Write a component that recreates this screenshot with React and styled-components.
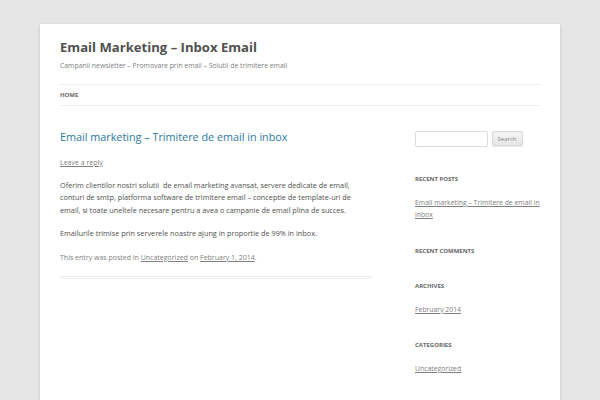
import React from "react";
import styled, { createGlobalStyle } from "styled-components";

const Global = createGlobalStyle`
  html, body { margin: 0; padding: 0; background: #e6e6e6; }
  body { font-family: "Open Sans", "Liberation Sans", Arial, sans-serif; color: #444; }
  * { box-sizing: border-box; }
`;

const Site = styled.div`
  margin: 24px 40px 0;
  background: #fff;
  padding: 0 20px;
  min-height: 376px;
  box-shadow: 0 1px 3px rgba(100, 100, 100, 0.3);
`;

const Header = styled.header`
  padding-top: 14.5px;
`;

const SiteTitle = styled.h1`
  margin: 0;
  font-size: 13.1px;
  line-height: 17px;
  font-weight: bold;
  color: #505050;
`;

const Description = styled.h2`
  margin: 3.5px 0 0;
  font-size: 6.85px;
  line-height: 13px;
  font-weight: normal;
  color: #808080;
`;

const Nav = styled.nav`
  margin-top: 11.5px;
  border-top: 1px solid #ededed;
  border-bottom: 1px solid #ededed;
  display: flex;
  gap: 21px;
`;

const NavItem = styled.a`
  font-size: 6px;
  line-height: 20px;
  font-weight: bold;
  text-transform: uppercase;
  color: #666;
  text-decoration: none;
`;

const Main = styled.div`
  display: flex;
  justify-content: space-between;
  padding-top: 24.5px;
`;

const Content = styled.main`
  width: 312px;
`;

const Article = styled.article`
  padding-bottom: 12px;
  border-bottom: 3px double #ededed;
`;

const EntryTitle = styled.h1`
  margin: 0;
  font-size: 10.8px;
  line-height: 13px;
  font-weight: normal;
  a { color: #2a7aa0; text-decoration: none; }
`;

const MutedLink = styled.a`
  color: #808080;
  text-decoration: underline;
`;

const CommentsLink = styled.div`
  margin-top: 12.5px;
  font-size: 7px;
  line-height: 13px;
`;

const EntryContent = styled.div`
  margin-top: 10.5px;
  p {
    margin: 0 0 11px;
    font-size: 7.3px;
    line-height: 12.4px;
    color: #505050;
  }
`;

const EntryMeta = styled.footer`
  margin-top: 1.5px;
  font-size: 7px;
  line-height: 13px;
  color: #808080;
`;

const Sidebar = styled.aside`
  width: 125px;
`;

const Widget = styled.section`
  margin-bottom: 23px;
  &:first-child { margin-bottom: 26.5px; }
`;

const WidgetTitle = styled.h3`
  margin: 0 0 12px;
  font-size: 6px;
  line-height: 12px;
  font-weight: bold;
  text-transform: uppercase;
  color: #666;
`;

const List = styled.ul`
  margin: 0;
  padding: 0;
  list-style: none;
  li {
    font-size: 6.85px;
    line-height: 12.3px;
  }
`;

const SearchForm = styled.form`
  display: flex;
  align-items: center;
  gap: 3.5px;
  padding-top: 0.5px;
`;

const SearchInput = styled.input`
  width: 73px;
  height: 16px;
  border: 1px solid #dcdcdc;
  border-radius: 2px;
  padding: 0 3px;
  font-family: inherit;
  font-size: 7px;
`;

const SearchButton = styled.button`
  width: 31px;
  height: 15px;
  padding: 0;
  font-family: inherit;
  font-size: 6px;
  color: #888;
  background: linear-gradient(#f4f4f4, #e6e6e6);
  border: 1px solid #d8d8d8;
  border-radius: 2px;
  box-shadow: 0 1px 1px rgba(64, 64, 64, 0.1);
`;

export default function App() {
  return (
    <>
      <Global />
      <Site>
        <Header>
          <SiteTitle>Email Marketing – Inbox Email</SiteTitle>
          <Description>
            Campanii newsletter – Promovare prin email – Solutii de trimitere email
          </Description>
          <Nav>
            <NavItem href="#">Home</NavItem>
          </Nav>
        </Header>
        <Main>
          <Content>
            <Article>
              <EntryTitle>
                <a href="#">Email marketing – Trimitere de email in inbox</a>
              </EntryTitle>
              <CommentsLink>
                <MutedLink href="#">Leave a reply</MutedLink>
              </CommentsLink>
              <EntryContent>
                <p>
                  Oferim clientilor nostri solutii&nbsp; de email marketing avansat, servere dedicate de email,
                  conturi de smtp, platforma software de trimitere email – conceptie de template-uri de
                  email, si toate uneltele necesare pentru a avea o campanie de email plina de succes.
                </p>
                <p>Emailurile trimise prin serverele noastre ajung in proportie de 99% in inbox.</p>
              </EntryContent>
              <EntryMeta>
                This entry was posted in <MutedLink href="#">Uncategorized</MutedLink> on{" "}
                <MutedLink href="#">February 1, 2014</MutedLink>.
              </EntryMeta>
            </Article>
          </Content>
          <Sidebar>
            <Widget>
              <SearchForm onSubmit={(e) => e.preventDefault()}>
                <SearchInput type="text" aria-label="Search for" />
                <SearchButton type="submit">Search</SearchButton>
              </SearchForm>
            </Widget>
            <Widget>
              <WidgetTitle>Recent Posts</WidgetTitle>
              <List>
                <li>
                  <MutedLink href="#">Email marketing – Trimitere de email in inbox</MutedLink>
                </li>
              </List>
            </Widget>
            <Widget>
              <WidgetTitle>Recent Comments</WidgetTitle>
              <List />
            </Widget>
            <Widget>
              <WidgetTitle>Archives</WidgetTitle>
              <List>
                <li>
                  <MutedLink href="#">February 2014</MutedLink>
                </li>
              </List>
            </Widget>
            <Widget>
              <WidgetTitle>Categories</WidgetTitle>
              <List>
                <li>
                  <MutedLink href="#">Uncategorized</MutedLink>
                </li>
              </List>
            </Widget>
          </Sidebar>
        </Main>
      </Site>
    </>
  );
}
